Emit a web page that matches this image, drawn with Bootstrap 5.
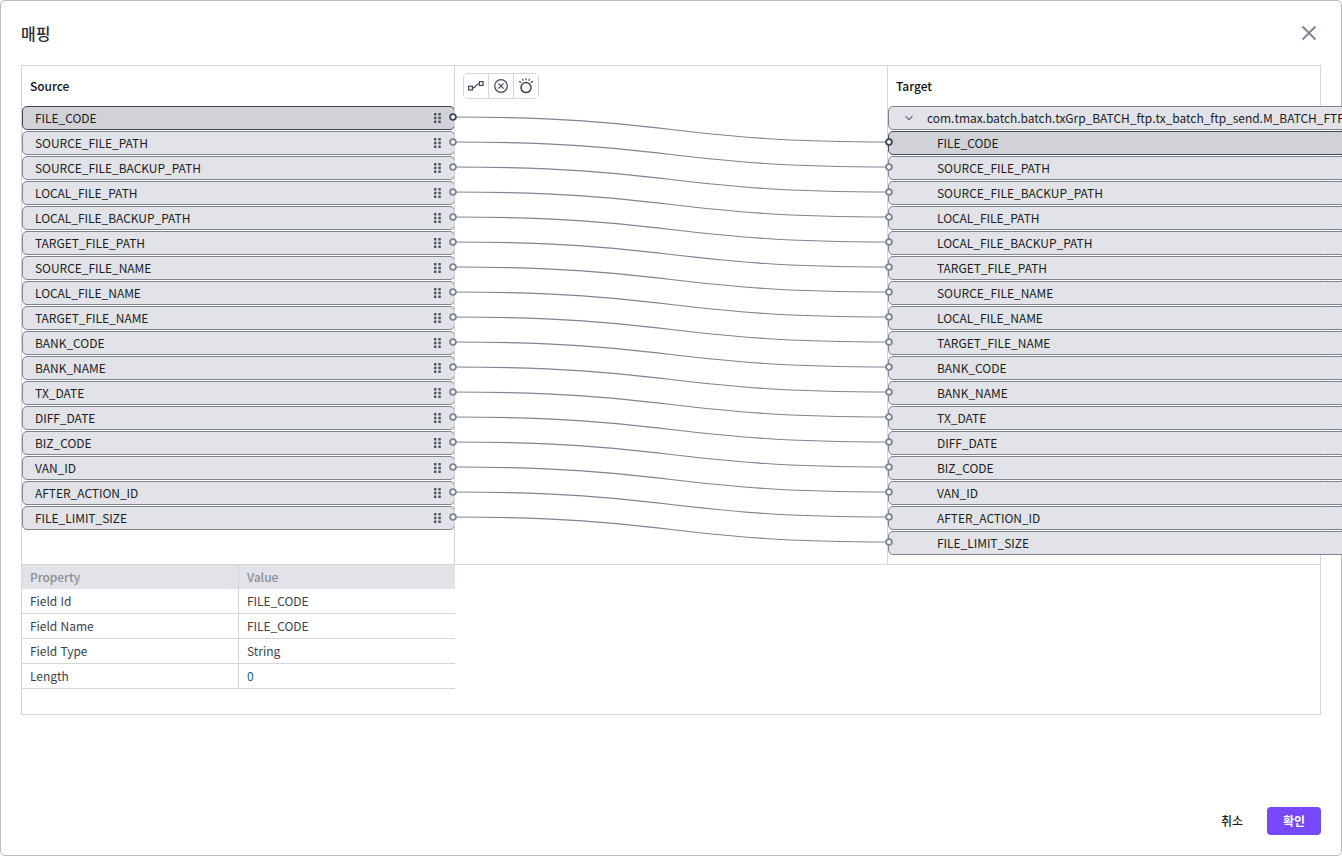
<!DOCTYPE html>
<html lang="ko">
<head>
    <meta charset="UTF-8">
    <title>매핑</title>
    <link href="https://cdn.jsdelivr.net/npm/bootstrap@5.3.0/dist/css/bootstrap.min.css" rel="stylesheet">
    <style>
        html, body { height: 100%; }
        body {
            margin: 0;
            background: #fff;
            font-family: "Noto Sans CJK KR", "Noto Sans", sans-serif;
            font-size: 12px;
            letter-spacing: -0.04px;
            color: #1b1d24;
        }
        .mapping-dialog {
            height: 856px;
            border: 1px solid #bcbcbc;
            border-radius: 5px;
            padding: 0 20px;
        }
        .dialog-title { height: 64px; }
        .dialog-title h5 { font-size: 16px; font-weight: 500; margin: 0; padding-top: 2px; color: #2b2e38; }
        .close-x { background: none; border: 0; padding: 0; width: 16px; height: 16px; margin-right: 4px; line-height: 0; }
        .mapping-panel { border: 1px solid #d5d6db; height: 650px; }
        .mapping-area { height: 499px; border-bottom: 1px solid #d5d6db; grid-template-columns: 432px 433px 1fr; }
        .map-col { height: 498px; }
        .map-col + .map-col { border-left: 1px solid #d5d6db; }
        .col-head { height: 40px; padding: 0 8px; font-weight: 500; color: #111; }
        .map-toolbar { height: 40px; padding: 7px 8px 0; }
        .tool-group { border: 1px solid #d5d6db; border-radius: 4px; height: 26px; }
        .tool-group button { width: 25px; height: 24px; background: #fff; border: 0; padding: 0; line-height: 0; border-radius: 4px; }
        .tool-group button:first-child { width: 24px; }
        .tool-group button + button { border-left: 1px solid #d5d6db; border-radius: 0; }
        .field-row {
            height: 24px;
            margin-bottom: 1px;
            border: 1px solid #7d838f;
            border-radius: 5px;
            background: #e2e3e8;
            padding: 0 12px;
        }
        .field-row.selected { background: #d1d2d8; border-color: #3f4656; }
        .field-row span { white-space: nowrap; overflow: hidden; text-overflow: ellipsis; }
        .source-col .field-row { margin-right: -1px; }
        .target-col .field-row { padding-left: 48px; }
        .target-col .field-row.root { padding-left: 15px; padding-right: 8px; gap: 13px; }
        .grip { margin-right: 1px; }
        .map-lines { position: absolute; top: 0; left: 0; width: 100%; height: 100%; pointer-events: none; overflow: visible; }
        .prop-wrap { width: 433px; }
        .prop-table { width: 100%; margin: 0; border-collapse: separate; border-spacing: 0; table-layout: fixed; }
        .prop-table th, .prop-table td { height: 25px; padding: 0 8px; border-bottom: 1px solid #d5d6db; color: #3a3f4b; font-weight: 400; }
        .prop-table th { height: 24px; background: #e2e3e8; color: #8b8e98; font-weight: 500; border-bottom: 0; }
        .prop-table th:first-child, .prop-table td:first-child { border-right: 1px solid #d5d6db; width: 217px; }
        .prop-table .num { color: #1f5a96; }
        .dialog-foot { height: 76px; }
        .btn-cancel { background: none; border: 0; font-size: 12px; font-weight: 500; padding: 0; width: 24px; color: #1b1d24; margin-right: 23px; }
        .btn-ok { background: #7749fb; color: #fff; border: 0; border-radius: 4px; width: 54px; height: 28px; font-size: 12px; font-weight: 700; padding: 0; }
    </style>
</head>
<body>
    <svg width="0" height="0" class="d-block position-absolute">
        <symbol id="grip" viewBox="0 0 7 10">
            <g fill="#4a505e">
                <rect x="0" y="0" width="2.4" height="2.4" rx=".5"/><rect x="4.4" y="0" width="2.4" height="2.4" rx=".5"/>
                <rect x="0" y="3.8" width="2.4" height="2.4" rx=".5"/><rect x="4.4" y="3.8" width="2.4" height="2.4" rx=".5"/>
                <rect x="0" y="7.6" width="2.4" height="2.4" rx=".5"/><rect x="4.4" y="7.6" width="2.4" height="2.4" rx=".5"/>
            </g>
        </symbol>
    </svg>

    <div class="mapping-dialog d-flex flex-column">
        <div class="dialog-title d-flex align-items-center justify-content-between">
            <h5>매핑</h5>
            <button class="close-x" type="button" aria-label="Close">
                <svg width="16" height="16" viewBox="0 0 16 16"><path d="M1.5 1.5l13 13M14.5 1.5l-13 13" stroke="#7f8590" stroke-width="2" fill="none"/></svg>
            </button>
        </div>

        <div class="mapping-panel">
            <div class="d-grid mapping-area position-relative" id="mappingArea">
                <!-- Source -->
                <div class="map-col source-col" id="sourceCol">
                    <div class="col-head d-flex align-items-center">Source</div>
                </div>

                <!-- Toolbar -->
                <div class="map-col">
                    <div class="map-toolbar">
                        <div class="tool-group d-inline-flex">
                            <button type="button" aria-label="Auto map">
                                <svg width="16" height="16" viewBox="0 0 16 16" fill="none" stroke="#3f4656" stroke-width="1.2">
                                    <rect x=".6" y="8.2" width="3.8" height="3.8"/>
                                    <rect x="11.3" y="3.6" width="3.8" height="3.8"/>
                                    <path d="M4.4 10.1C8 10.1 7.6 5.5 11.3 5.5"/>
                                </svg>
                            </button>
                            <button type="button" aria-label="Clear">
                                <svg width="16" height="16" viewBox="0 0 16 16" fill="none" stroke="#3f4656" stroke-width="1.2">
                                    <circle cx="8" cy="8" r="6.3"/>
                                    <path d="M5.4 5.4l5.2 5.2M10.6 5.4l-5.2 5.2"/>
                                </svg>
                            </button>
                            <button type="button" aria-label="Hint">
                                <svg width="16" height="16" viewBox="0 0 16 16" fill="none" stroke="#3f4656" stroke-width="1.5">
                                    <circle cx="8" cy="9.6" r="5"/>
                                    <path d="M1 3.4l2.4 1.1M15 3.4l-2.4 1.1M4.4 .9l.9 1.9M11.6 .9l-.9 1.9M8 .2v2" stroke-width="1.2"/>
                                </svg>
                            </button>
                        </div>
                    </div>
                </div>

                <!-- Target -->
                <div class="map-col target-col" id="targetCol">
                    <div class="col-head d-flex align-items-center">Target</div>
                    <div class="field-row root d-flex align-items-center">
                        <svg width="10" height="10" viewBox="0 0 10 10" class="flex-shrink-0"><path d="M1.5 3.2L5 6.7l3.5-3.5" stroke="#5d6370" stroke-width="1.1" fill="none"/></svg>
                        <span>com.tmax.batch.batch.txGrp_BATCH_ftp.tx_batch_ftp_send.M_BATCH_FTP_SEND_INPUT</span>
                    </div>
                </div>

                <svg class="map-lines" id="mapLines"></svg>
            </div>

            <div class="prop-wrap">
                <table class="prop-table">
                    <tr><th>Property</th><th>Value</th></tr>
                    <tr><td>Field Id</td><td>FILE_CODE</td></tr>
                    <tr><td>Field Name</td><td>FILE_CODE</td></tr>
                    <tr><td>Field Type</td><td>String</td></tr>
                    <tr><td>Length</td><td class="num">0</td></tr>
                </table>
            </div>
        </div>

        <div class="dialog-foot d-flex flex-grow-1 align-items-end justify-content-end pb-3 mb-1">
            <div class="d-flex align-items-center">
                <button class="btn-cancel" type="button">취소</button>
                <button class="btn-ok" type="button">확인</button>
            </div>
        </div>
    </div>

    <script>
        const fields = ['FILE_CODE', 'SOURCE_FILE_PATH', 'SOURCE_FILE_BACKUP_PATH', 'LOCAL_FILE_PATH',
            'LOCAL_FILE_BACKUP_PATH', 'TARGET_FILE_PATH', 'SOURCE_FILE_NAME', 'LOCAL_FILE_NAME',
            'TARGET_FILE_NAME', 'BANK_CODE', 'BANK_NAME', 'TX_DATE', 'DIFF_DATE', 'BIZ_CODE',
            'VAN_ID', 'AFTER_ACTION_ID', 'FILE_LIMIT_SIZE'];

        const sourceCol = document.getElementById('sourceCol');
        const targetCol = document.getElementById('targetCol');
        fields.forEach(function (name, i) {
            const cls = i === 0 ? ' selected' : '';
            sourceCol.insertAdjacentHTML('beforeend',
                `<div class="field-row${cls} d-flex align-items-center justify-content-between"><span>${name}</span>
                 <svg class="grip" width="7" height="10"><use href="#grip"/></svg></div>`);
            targetCol.insertAdjacentHTML('beforeend',
                `<div class="field-row${cls} d-flex align-items-center"><span>${name}</span></div>`);
        });

        // connectors, in coordinates of the mapping area (origin 22,66)
        let svg = '';
        fields.forEach(function (name, i) {
            const x1 = 431, x2 = 867, y1 = 51 + i * 25, y2 = 76 + i * 25, mid = (x1 + x2) / 2;
            svg += `<path d="M${x1} ${y1}C${mid} ${y1} ${mid} ${y2} ${x2} ${y2}" fill="none" stroke="#7f8494" stroke-width="1.1"/>`;
        });
        fields.forEach(function (name, i) {
            const color = i === 0 ? '#3f4656' : '#7d838f';
            svg += `<circle cx="431" cy="${51 + i * 25}" r="2.9" fill="#fff" stroke="${color}" stroke-width="1.8"/>`;
            svg += `<circle cx="867" cy="${76 + i * 25}" r="2.9" fill="#fff" stroke="${color}" stroke-width="1.8"/>`;
        });
        document.getElementById('mapLines').innerHTML = svg;
    </script>
    <script src="https://cdn.jsdelivr.net/npm/bootstrap@5.3.0/dist/js/bootstrap.bundle.min.js"></script>
</body>
</html>
